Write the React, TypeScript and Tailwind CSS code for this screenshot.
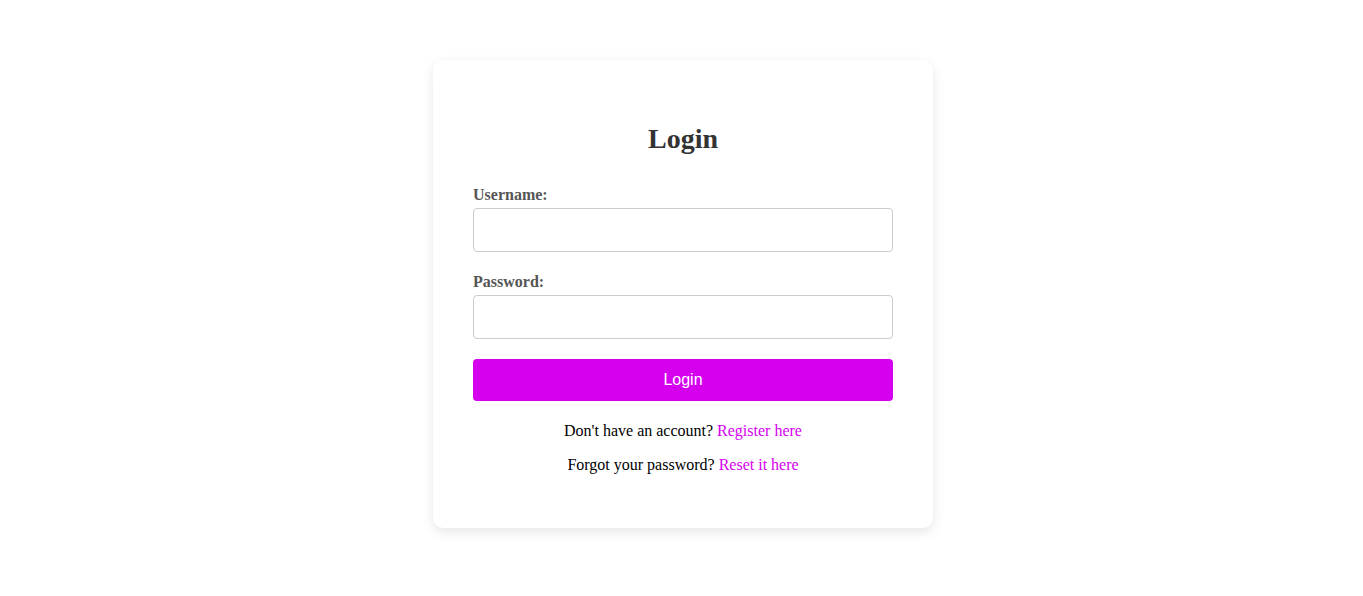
import { useState } from "react";

export default function App() {
  const [username, setUsername] = useState("");
  const [password, setPassword] = useState("");

  return (
    <div className="min-h-[596px] w-full bg-white font-['Liberation_Serif',serif]">
      <div className="flex justify-center pt-[60px] pl-[3px]">
        <div className="w-[500px] rounded-[10px] bg-white px-[40px] pt-[40px] pb-[53px] shadow-[0_4px_12px_rgba(0,0,0,0.1)]">
          {/* Title */}
          <h2 className="mt-[23px] mb-[30px] text-center text-[28px] font-bold leading-[32px] text-[#333]">
            Login
          </h2>

          <form onSubmit={(e) => e.preventDefault()}>
            <div className="mb-[20px]">
              <label className="mb-[3px] block text-[16px] font-bold leading-[20px] text-[#555]">
                Username:
              </label>
              <input
                type="text"
                value={username}
                onChange={(e) => setUsername(e.target.value)}
                className="block h-[44px] w-full rounded-[4px] border border-[#ccc] bg-white px-[10px] text-[16px] outline-none"
              />
            </div>

            <div className="mb-[20px]">
              <label className="mb-[3px] block text-[16px] font-bold leading-[20px] text-[#555]">
                Password:
              </label>
              <input
                type="password"
                value={password}
                onChange={(e) => setPassword(e.target.value)}
                className="block h-[44px] w-full rounded-[4px] border border-[#ccc] bg-white px-[10px] text-[16px] outline-none"
              />
            </div>

            <button
              type="submit"
              className="block h-[42px] w-full rounded-[4px] bg-[#d400ee] font-['Liberation_Sans',Arial,sans-serif] text-[16px] text-white"
            >
              Login
            </button>
          </form>

          {/* Footer links */}
          <div className="mt-[20px] text-center text-[16px] leading-[20px] text-black">
            <p>
              Don't have an account?{" "}
              <a href="#" className="text-[#d400ee]">
                Register here
              </a>
            </p>
            <p className="mt-[14px]">
              Forgot your password?{" "}
              <a href="#" className="text-[#d400ee]">
                Reset it here
              </a>
            </p>
          </div>
        </div>
      </div>
    </div>
  );
}
